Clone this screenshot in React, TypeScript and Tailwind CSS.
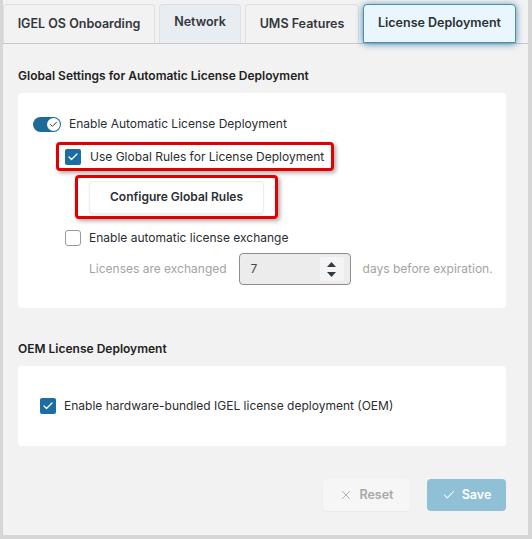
import { Check, X } from 'lucide-react';

const font = { fontFamily: 'Inter, "Noto Sans", sans-serif' };

function Tab({ label, active, tint }: { label: string; active?: boolean; tint?: boolean }) {
  if (active) {
    return (
      <div className="flex h-[39px] items-center justify-center whitespace-nowrap rounded-t-[4px] border border-[#4a8fb5] bg-[#e9f6fd] text-[12.5px] font-semibold text-[#2b2f33] shadow-[0_1px_7px_rgba(30,110,160,0.8)]">
        {label}
      </div>
    );
  }
  return (
    <div
      className={
        'flex h-[39px] items-center justify-center whitespace-nowrap rounded-t-[4px] border border-b-0 border-[#dedede] text-[12.5px] font-semibold text-[#33373b] ' +
        (tint ? 'bg-[#e8edf1] pb-[4px]' : 'bg-[#f2f2f2]')
      }
    >
      {label}
    </div>
  );
}

function CheckBox({ checked }: { checked?: boolean }) {
  return checked ? (
    <span className="flex h-[16px] w-[16px] shrink-0 items-center justify-center rounded-[2px] bg-[#1b6da3]">
      <Check size={12} strokeWidth={2.5} className="text-white" />
    </span>
  ) : (
    <span className="h-[16px] w-[16px] shrink-0 rounded-[3px] border border-[#9a9a9a] bg-white" />
  );
}

export default function App() {
  return (
    <div className="flex h-[539px] w-[532px] bg-[#d6d6d6]" style={font}>
      <div className="ml-[3px] flex h-[535px] w-[525px] flex-col bg-[#f2f2f2]">
        {/* Tabs */}
        <div className="flex items-end gap-[4px] border-b border-[#c8c8c8] pt-[4px]">
          <div className="w-[152px]"><Tab label="IGEL OS Onboarding" /></div>
          <div className="w-[82px]"><Tab label="Network" tint /></div>
          <div className="w-[114px]"><Tab label="UMS Features" /></div>
          <div className="w-[153px]"><Tab label="License Deployment" active /></div>
        </div>

        <div className="px-[15px]">
          <h2 className="mt-[23px] text-[12px] font-semibold text-[#222]">Global Settings for Automatic License Deployment</h2>
          <div className="mt-[8px] h-[215px] w-[488px] rounded-[4px] bg-white pt-[22px] text-[12px] text-[#2a2d30]">
            <div className="flex items-center pl-[15px]">
              <span className="relative flex h-[15px] w-[28px] items-center rounded-full bg-[#1d6a99]">
                <span className="absolute right-[1px] flex h-[13px] w-[13px] items-center justify-center rounded-full bg-white">
                  <Check size={9} strokeWidth={2.5} className="text-[#333]" />
                </span>
              </span>
              <span className="ml-[8px]">Enable Automatic License Deployment</span>
            </div>

            <div className="ml-[38px] mt-[9px] flex h-[29px] w-[278px] items-center rounded-[4px] border-[3px] border-[#e10000] pl-[6px] shadow-[2px_2px_4px_rgba(0,0,0,0.35)]">
              <CheckBox checked />
              <span className="ml-[9px] whitespace-nowrap">Use Global Rules for License Deployment</span>
            </div>

            <div className="ml-[57px] mt-[4px] flex h-[44px] w-[203px] items-center rounded-[4px] border-[3px] border-[#e10000] pl-[11px] shadow-[2px_2px_4px_rgba(0,0,0,0.35)]">
              <button className="h-[33px] w-[175px] rounded-[4px] border border-[#ececec] bg-white text-[12px] font-semibold text-[#2b2f33] shadow-[0_1px_2px_rgba(0,0,0,0.06)]">
                Configure Global Rules
              </button>
            </div>

            <div className="ml-[47px] mt-[10px] flex items-center">
              <CheckBox />
              <span className="ml-[8px]">Enable automatic license exchange</span>
            </div>

            <div className="ml-[71px] mt-[6px] flex items-center text-[#a3a3a3]">
              <span>Licenses are exchanged</span>
              <div className="ml-[12px] flex h-[32px] w-[112px] items-center justify-between rounded-[4px] border border-[#8d8d8d] bg-[#ececec] pl-[11px] pr-[6px] text-[#4a4a4a]">
                <span>7</span>
                <span className="flex h-[24px] w-[24px] flex-col items-center justify-center gap-[5px] rounded-[3px] bg-[#f4f4f4]">
                  <svg width="9" height="5" viewBox="0 0 9 5"><path d="M0 5 L4.5 0 L9 5 Z" fill="#2f3a44" /></svg>
                  <svg width="9" height="5" viewBox="0 0 9 5"><path d="M0 0 L4.5 5 L9 0 Z" fill="#2f3a44" /></svg>
                </span>
              </div>
              <span className="ml-[12px]">days before expiration.</span>
            </div>
          </div>

          <h2 className="mt-[32px] text-[12px] font-semibold text-[#222]">OEM License Deployment</h2>
          <div className="mt-[8px] flex h-[80px] w-[488px] items-center rounded-[4px] bg-white pl-[22px] text-[12px] text-[#2a2d30]">
            <CheckBox checked />
            <span className="ml-[8px]">Enable hardware-bundled IGEL license deployment (OEM)</span>
          </div>

          <div className="mt-[33px] flex justify-end gap-[17px] pr-[7px]">
            <button className="flex h-[32px] w-[87px] items-center justify-center gap-[6px] rounded-[4px] bg-[#f6f6f6] text-[12.5px] font-semibold text-[#a8a8a8] shadow-[0_1px_2px_rgba(0,0,0,0.04)]">
              <X size={14} strokeWidth={1.5} />
              Reset
            </button>
            <button className="flex h-[32px] w-[79px] items-center justify-center gap-[6px] rounded-[4px] bg-[#8fc0d6] text-[12.5px] font-semibold text-white">
              <Check size={14} strokeWidth={1.8} />
              Save
            </button>
          </div>
        </div>
      </div>
    </div>
  );
}
